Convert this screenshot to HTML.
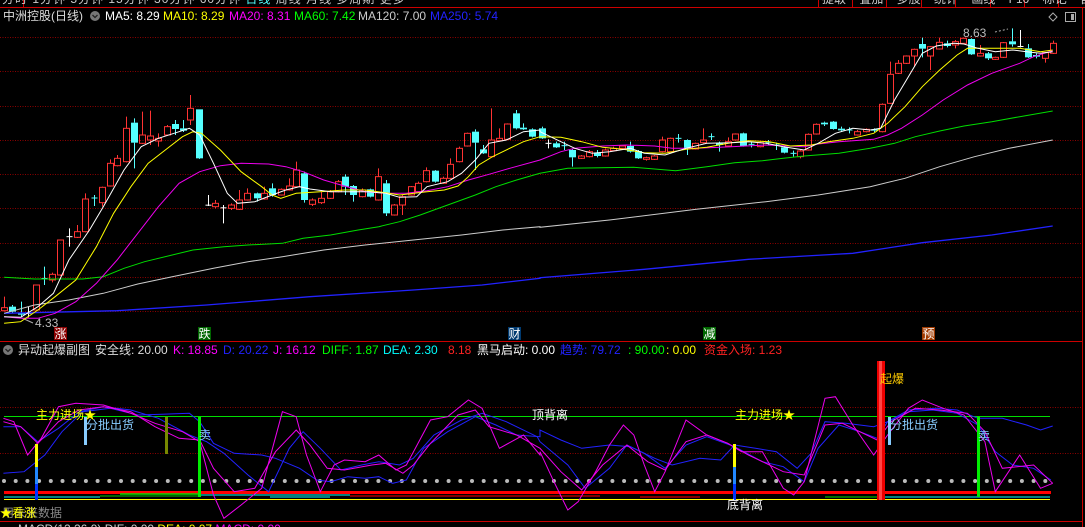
<!DOCTYPE html>
<html><head><meta charset="utf-8">
<style>
html,body{margin:0;padding:0;background:#000;overflow:hidden}
body{width:1085px;height:527px;position:relative;font-family:"Liberation Sans","Noto Sans CJK SC",sans-serif;font-size:12px}
.t{position:absolute;white-space:nowrap;line-height:13px}
svg{position:absolute;left:0;top:0}
</style></head><body>
<svg id="s" width="1085" height="527" xmlns="http://www.w3.org/2000/svg"></svg>

<div class="t" style="left:2px;top:-7px;color:#ccc;letter-spacing:1px">分时 1分钟 5分钟 15分钟 30分钟 60分钟 <span style="color:#5ff">日线</span> 周线 月线 多周期 更多</div>
<div class="t" style="left:822px;top:-7px;color:#ccc">提取&nbsp;&nbsp;&nbsp; 叠加&nbsp;&nbsp;&nbsp; 多股&nbsp;&nbsp;&nbsp; 统计&nbsp;&nbsp;&nbsp; 画线&nbsp;&nbsp;&nbsp; F10&nbsp;&nbsp;&nbsp; 标记&nbsp;&nbsp;&nbsp; 自</div>

<div class="t" style="left:3px;top:10px;color:#ddd">中洲控股(日线)</div>
<div class="t" style="left:105px;top:10px;color:#fff">MA5: 8.29</div>
<div class="t" style="left:163px;top:10px;color:#ff0">MA10: 8.29</div>
<div class="t" style="left:229px;top:10px;color:#f0f">MA20: 8.31</div>
<div class="t" style="left:294px;top:10px;color:#0f0">MA60: 7.42</div>
<div class="t" style="left:358px;top:10px;color:#ccc">MA120: 7.00</div>
<div class="t" style="left:430px;top:10px;color:#22f">MA250: 5.74</div>
<div class="t" style="left:963px;top:27px;color:#bbb">8.63</div>
<div class="t" style="left:35px;top:317px;color:#bbb">4.33</div>

<div class="t" style="left:18px;top:344px;color:#ddd">异动起爆副图</div>
<div class="t" style="left:95px;top:344px;color:#ddd">安全线: 20.00</div>
<div class="t" style="left:173px;top:344px;color:#f0f">K: 18.85</div>
<div class="t" style="left:223px;top:344px;color:#22f">D: 20.22</div>
<div class="t" style="left:273px;top:344px;color:#f0f">J: 16.12</div>
<div class="t" style="left:322px;top:344px;color:#0f0">DIFF: 1.87</div>
<div class="t" style="left:383px;top:344px;color:#0ff">DEA: 2.30</div>
<div class="t" style="left:448px;top:344px;color:#f22">8.18</div>
<div class="t" style="left:477px;top:344px;color:#fff">黑马启动: 0.00</div>
<div class="t" style="left:560px;top:344px;color:#22f">趋势: 79.72</div>
<div class="t" style="left:628px;top:344px;color:#0f0">: 90.00</div>
<div class="t" style="left:666px;top:344px;color:#ff0">: 0.00</div>
<div class="t" style="left:704px;top:344px;color:#f22">资金入场: 1.23</div>

<div class="t" style="left:36px;top:409px;color:#ff0">主力进场★</div>
<div class="t" style="left:86px;top:419px;color:#8cf">分批出货</div>
<div class="t" style="left:199px;top:429px;color:#8cf">卖</div>
<div class="t" style="left:532px;top:409px;color:#fff">顶背离</div>
<div class="t" style="left:735px;top:409px;color:#ff0">主力进场★</div>
<div class="t" style="left:727px;top:499px;color:#fff">底背离</div>
<div class="t" style="left:880px;top:373px;color:#fc0">起爆</div>
<div class="t" style="left:890px;top:419px;color:#8cf">分批出货</div>
<div class="t" style="left:978px;top:430px;color:#8cf">卖</div>
<div class="t" style="left:2px;top:507px;color:#888">用未来数据</div>
<div class="t" style="left:0px;top:507px;color:#ff0">★看涨</div>
<div class="t" style="left:18px;top:523px;color:#ccc">MACD(12,26,9) DIF: 0.00 <span style="color:#ff0">DEA: 0.07</span> <span style="color:#f0f">MACD: 0.00</span></div>

<script>
var S=document.getElementById('s'),h='';
function L(x1,y1,x2,y2,c,w,d){h+='<line x1="'+x1+'" y1="'+y1+'" x2="'+x2+'" y2="'+y2+'" stroke="'+c+'" stroke-width="'+(w||1)+'"'+(d?' stroke-dasharray="'+d+'"':'')+'/>';}
function R(x,y,w,hh,f,st){h+='<rect x="'+x+'" y="'+y+'" width="'+w+'" height="'+hh+'" fill="'+f+'"'+(st?' stroke="'+st+'"':'')+'/>';}
function P(pts,c,w){h+='<polyline fill="none" stroke="'+c+'" stroke-width="'+(w||1)+'" points="'+pts.map(function(p){return p[0].toFixed(1)+','+p[1].toFixed(1)}).join(' ')+'"/>';}
function z5(a){return a.map(function(p){return [p[0]*540/1568,80+p[1]/3]})}
function z6(a){return a.map(function(p){return [540+p[0]*545/1568,20+p[1]/3]})}
function s7(a){return a.map(function(p){return [p[0]*540/1568,355+p[1]/3]})}
function s8(a){return a.map(function(p){return [540+p[0]*545/1568,355+p[1]/3]})}
L(0,7.5,1085,7.5,'#c00');
[818,852,886,921,955,990,1024,1058].forEach(function(x){L(x+.5,0,x+.5,7,'#c00')});
L(23.5,0,23.5,7,'#c00');
L(1082.5,8,1082.5,527,'#c00');
[37,71,106,140,174,208,243,277,311].forEach(function(y){L(0,y+.5,1082,y+.5,'#8a0000',1,'1,1.5')});
L(0,341.5,1082,341.5,'#c00');
h+='<circle cx="95" cy="16" r="5" fill="#777"/><path d="M92.5 15 L95 17.5 L97.5 15" stroke="#222" fill="none" stroke-width="1.3"/>';
h+='<circle cx="8" cy="350" r="5" fill="#777"/><path d="M5.5 349 L8 351.5 L10.5 349" stroke="#222" fill="none" stroke-width="1.3"/>';
h+='<path d="M1053 13 L1057 17 L1053 21 L1049 17Z" stroke="#aaa" fill="none"/>';
R(1065.5,12.5,10,9,'none','#aaa');R(1071,14,3,6,'#aaa');
[[54,'#8a0000','涨'],[198,'#006600','跌'],[508,'#003a70','财'],[703,'#006600','减'],[922,'#a03a00','预']].forEach(function(a){R(a[0],327,13,13,a[1]);h+='<text x="'+(a[0]+.5)+'" y="338" fill="#fff" font-size="12">'+a[2]+'</text>';});
L(995,32,1008,29,'#aaa',1,'2,2');L(22,318,33,323,'#aaa');
var C5=[[12,683,692,650,695,'r'],[35,680,695,675,700,'c'],[60,698,704,665,712,'c'],[80,698,702,680,712,'w'],[105,615,690,615,692,'r'],[128,593,598,560,615,'cc'],[152,583,600,578,607,'r'],[175,480,585,480,588,'r'],[200,468,472,445,500,'w'],[225,455,472,435,474,'r'],[248,357,455,340,457,'r'],[272,352,356,345,378,'cc'],[295,322,368,320,380,'r'],[318,250,318,238,320,'r'],[340,235,257,225,259,'r'],[365,145,245,110,247,'r'],[390,128,188,115,265,'c'],[412,165,190,95,192,'r'],[437,168,180,92,195,'r'],[460,175,183,160,200,'r'],[484,140,165,135,167,'r'],[507,132,147,120,165,'c'],[530,145,152,120,156,'c'],[552,85,120,45,135,'r'],[578,88,235,88,237,'c'],[603,374,377,345,378,'w'],[625,370,380,360,385,'r'],[648,382,385,375,430,'w'],[672,375,385,370,390,'r'],[695,360,388,330,390,'r'],[718,340,360,325,362,'r'],[745,340,355,338,365,'c'],[768,340,357,320,359,'r'],[790,325,345,310,350,'c'],[815,328,345,325,347,'r'],[838,318,330,295,332,'r'],[860,270,320,245,322,'r'],[883,280,360,275,368,'c'],[907,360,373,355,378,'r'],[933,355,368,335,372,'r'],[957,335,355,330,357,'r'],[980,305,335,300,337,'r'],[1002,290,320,283,345,'c'],[1025,318,345,315,365,'c'],[1050,330,350,325,352,'r'],[1073,328,350,326,352,'c'],[1097,290,360,265,362,'r'],[1122,310,400,300,408,'c'],[1145,375,405,372,407,'r'],[1168,350,375,345,405,'r'],[1192,320,345,318,347,'r'],[1215,310,335,305,337,'r'],[1238,272,305,262,307,'r'],[1262,272,305,270,308,'c'],[1285,295,310,290,312,'r'],[1308,253,295,235,297,'r'],[1332,205,245,200,247,'r'],[1357,160,198,158,200,'r'],[1380,155,188,148,270,'c'],[1403,208,220,195,222,'c'],[1427,180,230,85,232,'r'],[1450,175,182,145,184,'r'],[1473,132,178,130,180,'r'],[1497,100,145,90,148,'c'],[1520,143,148,130,150,'c'],[1545,148,170,145,172,'c']];
var C6=[[5,325,355,320,357,'c'],[22,368,372,358,385,'w'],[45,370,382,365,384,'c'],[68,375,379,365,390,'cc'],[93,390,412,388,440,'c'],[118,408,415,405,417,'r'],[140,395,410,390,412,'r'],[165,398,408,390,412,'c'],[188,390,408,385,410,'r'],[210,385,392,380,394,'r'],[235,378,385,375,387,'r'],[258,378,395,365,398,'c'],[283,393,415,390,417,'c'],[305,413,418,410,422,'r'],[328,408,418,405,420,'r'],[352,360,395,350,397,'r'],[375,355,395,353,397,'r'],[398,353,357,342,368,'cc'],[422,360,385,358,405,'c'],[445,370,387,368,389,'r'],[470,360,368,325,370,'r'],[493,348,352,340,360,'cc'],[515,370,375,365,395,'c'],[540,365,378,352,380,'r'],[562,342,360,340,362,'r'],[585,340,378,338,380,'c'],[608,371,375,365,382,'cc'],[632,368,380,365,382,'r'],[655,365,369,360,375,'cc'],[680,373,377,368,390,'cc'],[703,382,398,378,400,'c'],[727,398,402,392,410,'cc'],[748,393,410,390,415,'r'],[772,343,390,340,392,'r'],[795,313,342,310,344,'r'],[818,308,313,305,318,'c'],[843,305,327,303,329,'c'],[867,326,331,320,336,'c'],[890,328,332,322,340,'cc'],[913,335,345,330,347,'r'],[937,328,335,325,337,'r'],[960,328,332,325,336,'c'],[983,253,335,250,337,'r'],[1006,163,250,125,252,'r'],[1030,130,160,120,162,'r'],[1053,108,130,106,132,'r'],[1077,88,108,86,140,'r'],[1100,72,86,53,112,'c'],[1123,80,108,78,150,'r'],[1147,67,87,53,89,'r'],[1170,70,78,62,82,'c'],[1193,65,75,60,85,'r'],[1217,55,70,53,72,'r'],[1240,57,103,55,105,'c'],[1265,100,108,75,110,'r'],[1288,100,115,96,120,'c'],[1310,112,118,110,120,'r'],[1333,68,112,66,114,'r'],[1357,64,73,25,80,'c'],[1380,78,81,30,82,'w'],[1405,85,112,72,114,'c'],[1428,105,110,100,115,'c'],[1452,98,115,96,128,'r'],[1475,70,100,62,102,'r']];
function cand(a,fx,oy){var x=fx(a[0]),t=oy+a[1]/3,b=oy+a[2]/3,hi=oy+a[3]/3,lo=oy+a[4]/3,ty=a[5];
 var col=(ty=='r')?'#f33':(ty=='w'?'#fff':'#5ff');
 if(ty=='w'||ty=='cc'){L(x,hi,x,lo,col);L(x-3,(t+b)/2,x+3,(t+b)/2,col);return;}
 L(x,hi,x,t,col);L(x,b,x,lo,col);
 if(ty=='r')R(x-3,t,6,Math.max(b-t,1),'none',col);else R(x-3.5,t,7,Math.max(b-t,1),col);}
C5.forEach(function(a){cand(a,function(z){return Math.round(z*540/1568)+.5},80)});
C6.forEach(function(a){cand(a,function(z){return Math.round(540+z*545/1568)+.5},20)});
P(z5([[12,700],[340,692],[600,675],[900,650],[1200,630],[1400,615],[1568,595]]).concat(z6([[0,773],[300,748],[600,718],[900,700],[1100,668],[1300,645],[1475,618]])),'#22f',1.3);
P(z5([[12,700],[100,675],[200,660],[300,640],[400,612],[500,590],[620,565],[720,545],[820,530],[940,510],[1060,495],[1200,480],[1340,465],[1460,450],[1568,440]]).concat(z6([[0,622],[200,600],[450,568],[650,545],[800,525],[950,500],[1050,475],[1150,440],[1250,410],[1350,385],[1475,360]])),'#ccc');
P(z5([[12,592],[100,597],[240,597],[300,590],[360,565],[420,545],[500,525],[560,510],[650,500],[720,495],[820,490],[880,475],[960,465],[1040,450],[1100,440],[1160,425],[1220,405],[1300,375],[1380,345],[1440,320],[1500,300],[1568,280]]).concat(z6([[0,460],[80,445],[270,442],[390,452],[480,440],[560,428],[640,422],[700,415],[760,408],[860,400],[950,385],[1020,370],[1080,350],[1150,333],[1220,318],[1300,305],[1380,290],[1475,273]])),'#0d0');
P(z5([[12,710],[60,715],[110,715],[160,700],[220,665],[280,610],[340,540],[400,460],[460,380],[520,310],[580,275],[640,257],[700,250],[780,252],[830,260],[880,275],[940,300],[1000,318],[1060,335],[1120,340],[1180,340],[1240,332],[1300,320],[1360,300],[1420,283],[1480,265],[1568,240]]).concat(z6([[0,420],[60,395],[100,385],[180,378],[250,375],[330,378],[380,385],[450,385],[550,380],[650,375],[760,380],[800,372],[860,365],[960,358],[1000,345],[1040,325],[1100,285],[1160,240],[1230,195],[1300,160],[1380,130],[1420,110],[1475,92]])),'#e0e');
P(z5([[12,730],[60,725],[110,690],[160,650],[220,600],[280,500],[330,400],[380,320],[430,250],[480,210],[530,170],[560,155],[585,160],[640,210],[700,275],[760,320],[790,345],[815,355],[860,340],[930,335],[1000,330],[1060,330],[1120,338],[1160,345],[1240,335],[1290,330],[1330,318],[1360,290],[1390,255],[1430,230],[1480,205],[1520,185],[1568,170]]).concat(z6([[0,350],[60,352],[120,365],[180,382],[240,388],[300,398],[360,400],[420,388],[480,382],[550,368],[600,362],[660,365],[720,378],[780,375],[830,365],[900,355],[960,340],[1000,310],[1050,260],[1100,200],[1150,150],[1200,105],[1230,85],[1300,85],[1380,85],[1440,95],[1475,90]])),'#ff0');
P(z5([[12,710],[60,712],[110,680],[155,640],[200,540],[260,450],[300,380],[360,270],[410,200],[460,175],[520,155],[550,145],[580,165],[620,250],[660,340],[690,370],[740,365],[790,345],[830,330],[870,320],[900,327],[960,335],[1020,335],[1070,335],[1120,340],[1160,352],[1210,350],[1240,320],[1300,305],[1340,280],[1380,240],[1420,190],[1470,180],[1520,155],[1568,150]]).concat(z6([[0,335],[60,365],[100,385],[150,400],[200,395],[260,385],[300,400],[360,405],[420,385],[480,370],[550,368],[600,365],[650,370],[700,380],[760,390],[800,370],[850,340],[900,325],[950,330],[980,325],[1020,240],[1060,170],[1100,100],[1140,78],[1190,70],[1220,72],[1260,85],[1310,95],[1360,90],[1400,95],[1440,100],[1475,95]])),'#fff');
L(0,407.5,1082,407.5,'#8a0000',1,'1,1.5');L(0,453.5,1082,453.5,'#8a0000',1,'1,1.5');
L(4,416.5,1050,416.5,'#0d0');
for(var x=4;x<1052;x+=11.7)h+='<circle cx="'+x.toFixed(1)+'" cy="481" r="2" fill="#bbb"/>';
R(4,491,1047,3,'#f00');
L(4,499.5,1050,499.5,'#ff0');
L(4,497,100,497,'#0ff');L(100,496,200,496,'#0c0');L(200,495,350,495,'#0ff');L(120,494,200,494,'#0d0',1.5);L(350,496,600,496,'#f00');L(270,497,330,497,'#0ff');L(640,497,700,497,'#f00');L(825,497,880,497,'#0d0');L(880,497,1050,497,'#0ff');
L(0,521.5,1082,521.5,'#c00');
P(s7([[10,355],[70,350],[130,300],[180,230],[240,170],[320,160],[400,180],[470,178],[550,175],[580,200],[620,265],[680,295],[760,300],[800,310],[870,340],[920,375],[960,380],[1010,365],[1060,370],[1100,365],[1140,385],[1180,375],[1230,280],[1300,230],[1380,185],[1440,210],[1500,240],[1568,245]]).concat(s8([[0,225],[60,255],[120,280],[200,270],[260,275],[330,310],[380,330],[460,310],[520,315],[560,270],[620,280],[680,290],[740,340],[780,295],[820,200],[880,205],[960,215],[1000,200],[1060,165],[1140,160],[1200,165],[1260,190],[1330,190],[1400,210],[1440,225],[1475,213]])),'#22f');
P(s7([[10,215],[60,215],[110,260],[170,220],[230,170],[300,155],[380,165],[460,190],[550,240],[600,260],[650,295],[720,360],[780,410],[840,280],[880,230],[930,280],[990,345],[1050,330],[1100,320],[1160,330],[1200,310],[1260,240],[1340,195],[1400,175],[1470,200],[1560,245]]).concat(s8([[0,260],[80,330],[130,400],[200,340],[250,270],[300,295],[360,340],[420,270],[480,245],[560,275],[640,320],[700,335],[760,380],[800,280],[860,210],[920,230],[970,250],[1000,200],[1060,170],[1130,165],[1200,175],[1260,210],[1310,290],[1360,330],[1420,340],[1470,375]])),'#22f');
P(s7([[10,190],[40,200],[80,300],[120,250],[170,155],[220,145],[300,150],[380,175],[450,205],[530,230],[580,260],[620,420],[650,490],[700,450],[760,400],[820,170],[860,185],[890,300],[930,410],[970,330],[1000,315],[1060,320],[1100,300],[1150,345],[1180,330],[1250,195],[1300,185],[1360,135],[1400,160],[1450,280],[1520,240],[1568,300]]).concat(s8([[0,290],[40,380],[80,465],[110,440],[160,350],[200,270],[240,210],[270,240],[300,330],[330,410],[360,350],[420,195],[480,240],[540,265],[580,290],[640,290],[700,400],[730,420],[760,380],[820,130],[850,125],[900,210],[960,300],[1000,240],[1060,160],[1100,135],[1160,160],[1220,180],[1280,260],[1310,410],[1380,300],[1440,400],[1475,385]])),'#e0e');
P(s7([[10,200],[60,215],[110,265],[170,200],[230,165],[300,155],[380,170],[450,215],[520,250],[580,255],[620,340],[680,410],[740,400],[800,290],[860,225],[900,270],[950,340],[1000,345],[1080,330],[1120,325],[1170,355],[1200,330],[1250,265],[1330,180],[1380,165],[1420,215],[1500,240],[1568,280]]).concat(s8([[0,280],[60,350],[120,405],[180,330],[250,270],[310,320],[360,345],[420,260],[480,240],[540,265],[600,300],[700,350],[760,360],[820,210],[870,205],[920,230],[970,255],[1010,200],[1080,160],[1150,165],[1230,175],[1280,230],[1330,340],[1420,330],[1475,385]])),'#e0e');
R(35,444,3,23,'#ff0');R(35,467,3,17,'#28f');R(35,484,3,16,'#03f');
R(84,417,3,28,'#8cf');R(165,417,3,37,'#780');R(198,417,3,80,'#0e0');
R(733,444,3,23,'#ff0');R(733,467,3,17,'#28f');R(733,484,3,16,'#03f');
R(877,361,8,139,'#e00');R(879,361,3,139,'#f44');
R(888,417,3,28,'#8cf');R(977,417,3,80,'#0e0');
S.innerHTML=h;
</script>
</body></html>
